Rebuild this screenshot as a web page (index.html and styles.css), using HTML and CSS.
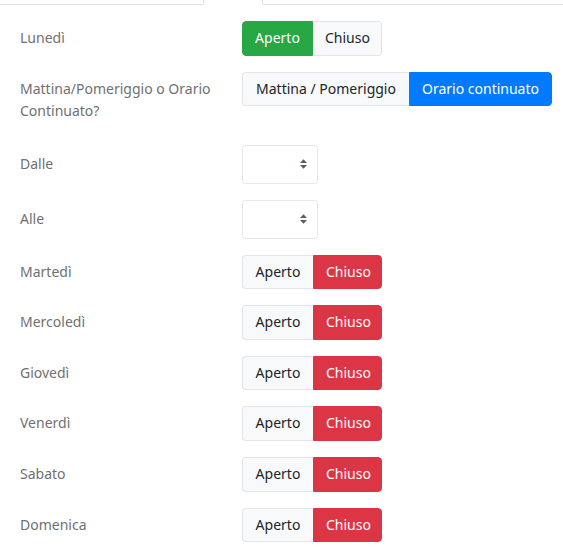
FILE: index.html
```html
<!DOCTYPE html>
<html lang="it">
<head>
<meta charset="utf-8">
<title>Orari</title>
<link rel="stylesheet" href="styles.css">
</head>
<body>
<div class="tabs">
  <div class="tab-box tab-left"></div>
  <div class="tab-gap"></div>
  <div class="tab-box tab-right"></div>
</div>
<form class="form">
  <div class="row">
    <label class="label">Lunedì</label>
    <div class="control">
      <div class="btn-group">
        <button type="button" class="btn btn-success w-aperto">Aperto</button>
        <button type="button" class="btn btn-light w-chiuso">Chiuso</button>
      </div>
    </div>
  </div>
  <div class="row">
    <label class="label">Mattina/Pomeriggio o Orario Continuato?</label>
    <div class="control">
      <div class="btn-group">
        <button type="button" class="btn btn-light w-mattina">Mattina / Pomeriggio</button>
        <button type="button" class="btn btn-primary w-orario">Orario continuato</button>
      </div>
    </div>
  </div>
  <div class="row row-select">
    <label class="label">Dalle</label>
    <div class="control">
      <div class="select">
        <svg width="7" height="10" viewBox="0 0 4 5.5"><path d="M2 0L0 2.2h4zm0 5.5L0 3.3h4z" fill="#5a5f66"/></svg>
      </div>
    </div>
  </div>
  <div class="row row-select">
    <label class="label">Alle</label>
    <div class="control">
      <div class="select">
        <svg width="7" height="10" viewBox="0 0 4 5.5"><path d="M2 0L0 2.2h4zm0 5.5L0 3.3h4z" fill="#5a5f66"/></svg>
      </div>
    </div>
  </div>
  <div class="row">
    <label class="label">Martedì</label>
    <div class="control"><div class="btn-group"><button type="button" class="btn btn-light w-aperto">Aperto</button><button type="button" class="btn btn-danger w-chiuso">Chiuso</button></div></div>
  </div>
  <div class="row">
    <label class="label">Mercoledì</label>
    <div class="control"><div class="btn-group"><button type="button" class="btn btn-light w-aperto">Aperto</button><button type="button" class="btn btn-danger w-chiuso">Chiuso</button></div></div>
  </div>
  <div class="row">
    <label class="label">Giovedì</label>
    <div class="control"><div class="btn-group"><button type="button" class="btn btn-light w-aperto">Aperto</button><button type="button" class="btn btn-danger w-chiuso">Chiuso</button></div></div>
  </div>
  <div class="row">
    <label class="label">Venerdì</label>
    <div class="control"><div class="btn-group"><button type="button" class="btn btn-light w-aperto">Aperto</button><button type="button" class="btn btn-danger w-chiuso">Chiuso</button></div></div>
  </div>
  <div class="row">
    <label class="label">Sabato</label>
    <div class="control"><div class="btn-group"><button type="button" class="btn btn-light w-aperto">Aperto</button><button type="button" class="btn btn-danger w-chiuso">Chiuso</button></div></div>
  </div>
  <div class="row">
    <label class="label">Domenica</label>
    <div class="control"><div class="btn-group"><button type="button" class="btn btn-light w-aperto">Aperto</button><button type="button" class="btn btn-danger w-chiuso">Chiuso</button></div></div>
  </div>
</form>
</body>
</html>
```
FILE: styles.css
```css
* { box-sizing: border-box; }
html, body {
  margin: 0;
  padding: 0;
  background: #fff;
}
body {
  font-family: "Noto Sans", "Open Sans", sans-serif;
  font-size: 14px;
  line-height: 22.5px;
  color: #212529;
}
.tabs {
  display: flex;
  height: 5px;
  margin-bottom: 16px;
}
.tab-box {
  height: 5px;
  border: 1px solid #dee2e6;
  border-top: none;
}
.tab-left {
  width: 204px;
  border-left: none;
  border-bottom-right-radius: 2px;
}
.tab-gap { width: 58px; }
.tab-right {
  flex: 1;
  border-right: none;
  border-bottom-left-radius: 2px;
}
.form {
  padding-left: 20px;
}
.row {
  display: flex;
  align-items: flex-start;
  margin-bottom: 16px;
}
.label {
  width: 222px;
  flex: none;
  padding: 6px 12px 6px 0;
  color: #707070;
}
.row-select .label {
  padding-top: 8px;
}
.control {
  display: flex;
}
.btn-group {
  display: flex;
}
.btn {
  font-family: inherit;
  font-size: 14px;
  line-height: 22.5px;
  height: 34.6px;
  padding: 0 12px;
  border: 1px solid transparent;
  margin: 0;
  text-align: center;
  white-space: nowrap;
}
.btn-group .btn:first-child {
  border-radius: 4px 0 0 4px;
}
.btn-group .btn:last-child {
  border-radius: 0 4px 4px 0;
}
.btn-light {
  background: #f8f9fa;
  border-color: #e3e6e9;
  color: #212529;
}
.btn-group .btn-light:first-child { border-right: none; }
.btn-group .btn-light:last-child { border-left: none; }
.btn-success {
  background: #28a745;
  border-color: #28a745;
  color: #fff;
}
.btn-primary {
  background: #007bff;
  border-color: #007bff;
  color: #fff;
}
.btn-danger {
  background: #dc3545;
  border-color: #dc3545;
  color: #fff;
}
.w-aperto { width: 71px; }
.w-chiuso { width: 69px; }
.w-mattina { width: 167px; }
.w-orario { width: 143px; }
.select {
  width: 76px;
  height: 39px;
  border: 1px solid #e8e8e8;
  border-radius: 4px;
  background: #fff;
  display: flex;
  align-items: center;
  justify-content: flex-end;
  padding-right: 10px;
}
.select svg { display: block; }
```
